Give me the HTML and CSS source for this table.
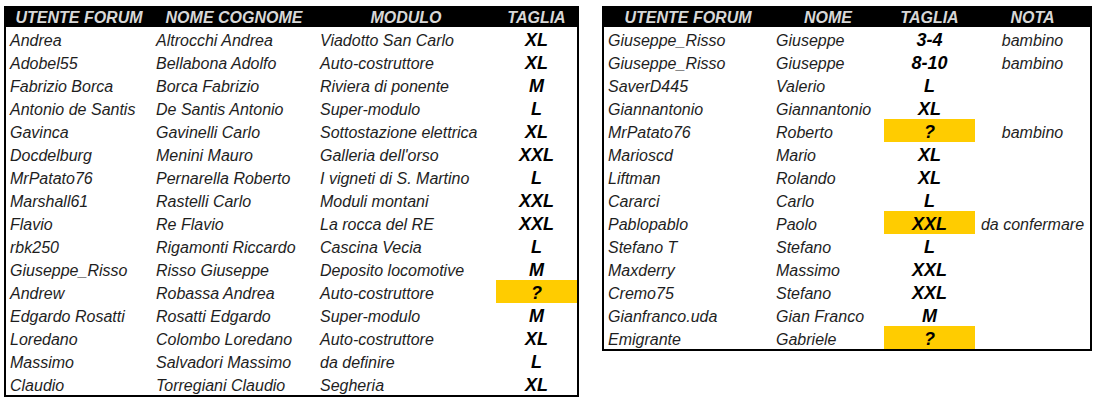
FILE: index.html
```html
<!DOCTYPE html>
<html lang="it">
<head>
<meta charset="utf-8">
<title>Taglie</title>
<link rel="stylesheet" href="styles.css">
</head>
<body>
<div class="page">
  <div class="sheet sheet-left">
    <div class="row head"><div>UTENTE FORUM</div><div>NOME COGNOME</div><div>MODULO</div><div>TAGLIA</div></div>
    <div class="row"><div class="txt">Andrea</div><div class="txt">Altrocchi Andrea</div><div class="txt">Viadotto San Carlo</div><div class="size">XL</div></div>
    <div class="row"><div class="txt">Adobel55</div><div class="txt">Bellabona Adolfo</div><div class="txt">Auto-costruttore</div><div class="size">XL</div></div>
    <div class="row"><div class="txt">Fabrizio Borca</div><div class="txt">Borca Fabrizio</div><div class="txt">Riviera di ponente</div><div class="size">M</div></div>
    <div class="row"><div class="txt">Antonio de Santis</div><div class="txt">De Santis Antonio</div><div class="txt">Super-modulo</div><div class="size">L</div></div>
    <div class="row"><div class="txt">Gavinca</div><div class="txt">Gavinelli Carlo</div><div class="txt">Sottostazione elettrica</div><div class="size">XL</div></div>
    <div class="row"><div class="txt">Docdelburg</div><div class="txt">Menini Mauro</div><div class="txt">Galleria dell'orso</div><div class="size">XXL</div></div>
    <div class="row"><div class="txt">MrPatato76</div><div class="txt">Pernarella Roberto</div><div class="txt">I vigneti di S. Martino</div><div class="size">L</div></div>
    <div class="row"><div class="txt">Marshall61</div><div class="txt">Rastelli Carlo</div><div class="txt">Moduli montani</div><div class="size">XXL</div></div>
    <div class="row"><div class="txt">Flavio</div><div class="txt">Re Flavio</div><div class="txt">La rocca del RE</div><div class="size">XXL</div></div>
    <div class="row"><div class="txt">rbk250</div><div class="txt">Rigamonti Riccardo</div><div class="txt">Cascina Vecia</div><div class="size">L</div></div>
    <div class="row"><div class="txt">Giuseppe_Risso</div><div class="txt">Risso Giuseppe</div><div class="txt">Deposito locomotive</div><div class="size">M</div></div>
    <div class="row"><div class="txt">Andrew</div><div class="txt">Robassa Andrea</div><div class="txt">Auto-costruttore</div><div class="size hl">?</div></div>
    <div class="row"><div class="txt">Edgardo Rosatti</div><div class="txt">Rosatti Edgardo</div><div class="txt">Super-modulo</div><div class="size">M</div></div>
    <div class="row"><div class="txt">Loredano</div><div class="txt">Colombo Loredano</div><div class="txt">Auto-costruttore</div><div class="size">XL</div></div>
    <div class="row"><div class="txt">Massimo</div><div class="txt">Salvadori Massimo</div><div class="txt">da definire</div><div class="size">L</div></div>
    <div class="row"><div class="txt">Claudio</div><div class="txt">Torregiani Claudio</div><div class="txt">Segheria</div><div class="size">XL</div></div>
  </div>

  <div class="sheet sheet-right">
    <div class="row head"><div>UTENTE FORUM</div><div>NOME</div><div>TAGLIA</div><div>NOTA</div></div>
    <div class="row"><div class="txt">Giuseppe_Risso</div><div class="txt">Giuseppe</div><div class="size">3-4</div><div class="note">bambino</div></div>
    <div class="row"><div class="txt">Giuseppe_Risso</div><div class="txt">Giuseppe</div><div class="size">8-10</div><div class="note">bambino</div></div>
    <div class="row"><div class="txt">SaverD445</div><div class="txt">Valerio</div><div class="size">L</div><div class="note"></div></div>
    <div class="row"><div class="txt">Giannantonio</div><div class="txt">Giannantonio</div><div class="size">XL</div><div class="note"></div></div>
    <div class="row"><div class="txt">MrPatato76</div><div class="txt">Roberto</div><div class="size hl">?</div><div class="note">bambino</div></div>
    <div class="row"><div class="txt">Marioscd</div><div class="txt">Mario</div><div class="size">XL</div><div class="note"></div></div>
    <div class="row"><div class="txt">Liftman</div><div class="txt">Rolando</div><div class="size">XL</div><div class="note"></div></div>
    <div class="row"><div class="txt">Cararci</div><div class="txt">Carlo</div><div class="size">L</div><div class="note"></div></div>
    <div class="row"><div class="txt">Pablopablo</div><div class="txt">Paolo</div><div class="size hl">XXL</div><div class="note">da confermare</div></div>
    <div class="row"><div class="txt">Stefano T</div><div class="txt">Stefano</div><div class="size">L</div><div class="note"></div></div>
    <div class="row"><div class="txt">Maxderry</div><div class="txt">Massimo</div><div class="size">XXL</div><div class="note"></div></div>
    <div class="row"><div class="txt">Cremo75</div><div class="txt">Stefano</div><div class="size">XXL</div><div class="note"></div></div>
    <div class="row"><div class="txt">Gianfranco.uda</div><div class="txt">Gian Franco</div><div class="size">M</div><div class="note"></div></div>
    <div class="row"><div class="txt">Emigrante</div><div class="txt">Gabriele</div><div class="size hl">?</div><div class="note"></div></div>
  </div>
</div>
</body>
</html>
```

FILE: styles.css
```css
html, body {
  margin: 0;
  padding: 0;
  background: #ffffff;
}

body {
  font-family: "Liberation Sans", Arial, sans-serif;
  font-style: italic;
  color: #1e1e1e;
}

.page {
  display: flex;
  align-items: flex-start;
  gap: 23px;
  padding: 6px 0 0 4px;
}

.sheet {
  border: 2px solid #000000;
  border-top: 0;
  background: #ffffff;
}

.sheet-left {
  --cols: 146px 164px 180px 81px;
}

.sheet-right {
  --cols: 168px 112px 91px 115px;
}

.row {
  display: grid;
  grid-template-columns: var(--cols);
  height: 23px;
}

.row > div {
  box-sizing: border-box;
  height: 23px;
  white-space: nowrap;
  overflow: visible;
}

.row.head {
  background: #000000;
  height: 21px;
  margin: 0 -2px;
  padding: 0 2px;
  box-sizing: content-box;
}

.row.head > div {
  height: 21px;
  line-height: 21px;
  padding-top: 1px;
  text-align: center;
  color: #d8d8d8;
  font-weight: bold;
  font-size: 16px;
}

.txt {
  font-size: 16px;
  line-height: 21px;
  padding: 3px 0 0 4px;
}

.note {
  font-size: 16px;
  line-height: 21px;
  padding-top: 3px;
  text-align: center;
}

.size {
  font-size: 18px;
  font-weight: bold;
  line-height: 21px;
  padding-top: 3px;
  text-align: center;
  color: #000000;
}

.size.hl {
  background: #ffcc00;
}
```
